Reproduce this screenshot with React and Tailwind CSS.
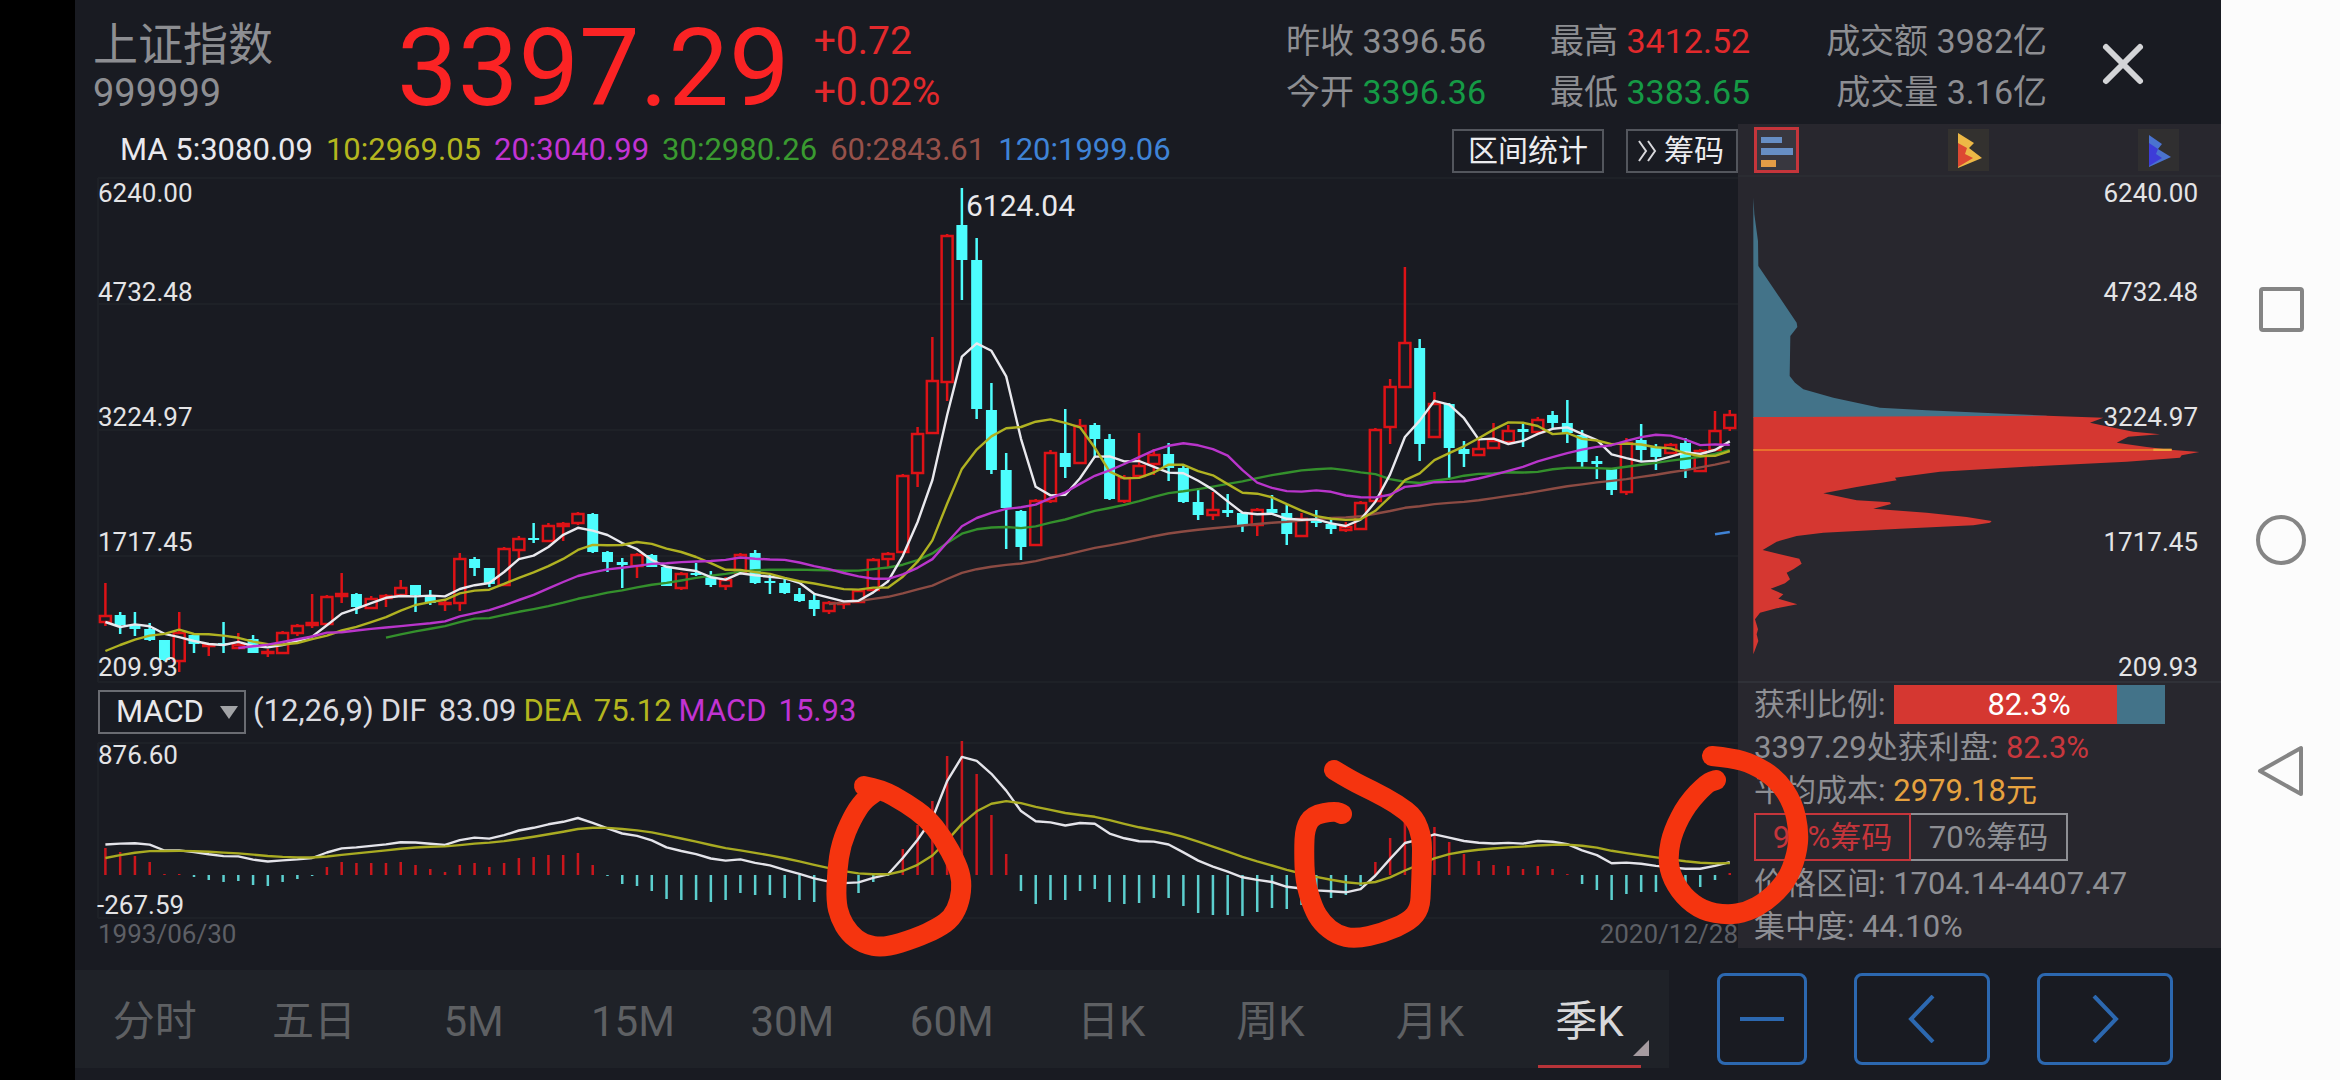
import { useState } from "react";
import clsx from "clsx";

const FIRST_X = 105.4;
const STEP = 14.767;
const xAt = (i) => FIRST_X + i * STEP;

// [up, high, body top, body bottom, low] on the drawing's y axis, one per quarter
const CANDLES = [
	[1, 582, 614, 621, 625], [0, 611, 614, 624, 633], [0, 611, 624, 628, 635], [0, 622, 628, 639, 640],
	[0, 639, 639, 659, 660], [1, 611, 631, 660, 671], [0, 632, 634, 643, 652], [1, 642, 643, 645, 655],
	[0, 621, 642, 644, 652], [1, 632, 643, 647, 648], [0, 634, 638, 652, 652], [1, 648, 650, 652, 656],
	[1, 630, 631, 652, 652], [1, 623, 624, 632, 635], [1, 593, 621, 624, 627], [1, 594, 595, 623, 624],
	[1, 572, 592, 595, 602], [0, 592, 593, 606, 613], [1, 595, 597, 607, 608], [1, 593, 594, 597, 606],
	[1, 579, 586, 594, 596], [0, 584, 584, 594, 611], [0, 589, 594, 602, 604], [1, 599, 601, 603, 610],
	[1, 552, 557, 602, 610], [0, 556, 558, 567, 575], [0, 567, 567, 583, 586], [1, 546, 547, 584, 585],
	[1, 535, 537, 549, 557], [0, 522, 537, 539, 542], [1, 522, 524, 540, 541], [1, 521, 522, 525, 540],
	[1, 511, 512, 522, 524], [0, 512, 513, 551, 552], [0, 550, 551, 561, 571], [0, 557, 561, 564, 587],
	[1, 552, 553, 565, 577], [0, 553, 554, 566, 566], [0, 565, 566, 585, 585], [1, 571, 572, 587, 589],
	[0, 562, 572, 574, 575], [0, 570, 576, 584, 586], [1, 576, 578, 585, 589], [1, 552, 553, 572, 572],
	[0, 549, 552, 582, 583], [0, 574, 580, 582, 593], [0, 577, 582, 592, 593], [0, 587, 593, 600, 601],
	[0, 592, 599, 608, 615], [1, 600, 601, 610, 613], [1, 600, 601, 602, 608], [1, 588, 589, 601, 602],
	[1, 557, 558, 589, 590], [1, 551, 552, 558, 567], [1, 473, 474, 551, 551], [1, 426, 432, 472, 486],
	[1, 336, 379, 432, 432], [1, 233, 234, 381, 400], [0, 187, 224, 259, 299], [0, 237, 259, 408, 418],
	[0, 382, 409, 469, 473], [0, 452, 469, 507, 548], [0, 509, 510, 546, 559], [1, 498, 499, 544, 545],
	[1, 449, 451, 500, 502], [0, 408, 452, 466, 477], [1, 418, 424, 462, 462], [0, 422, 424, 438, 457],
	[0, 433, 438, 498, 499], [1, 474, 476, 500, 502], [1, 432, 464, 475, 475], [1, 448, 453, 463, 474],
	[0, 442, 453, 467, 480], [0, 463, 467, 501, 502], [0, 487, 501, 514, 519], [1, 491, 508, 514, 519],
	[0, 493, 509, 512, 516], [0, 511, 512, 524, 531], [1, 507, 508, 524, 535], [0, 494, 508, 512, 513],
	[0, 504, 512, 533, 544], [1, 512, 517, 535, 536], [0, 509, 519, 522, 526], [0, 518, 523, 528, 533],
	[1, 521, 525, 529, 531], [1, 500, 501, 528, 528], [1, 427, 428, 500, 500], [1, 378, 385, 426, 443],
	[1, 266, 341, 386, 386], [0, 338, 347, 443, 460], [1, 391, 402, 436, 436], [0, 402, 403, 447, 478],
	[0, 440, 448, 453, 466], [1, 439, 447, 454, 455], [1, 422, 439, 447, 447], [1, 424, 429, 441, 441],
	[0, 423, 428, 431, 446], [1, 416, 418, 431, 432], [0, 410, 414, 422, 427], [0, 399, 422, 432, 442],
	[0, 429, 434, 461, 466], [0, 455, 460, 463, 478], [0, 468, 468, 489, 494], [1, 437, 441, 491, 494],
	[0, 423, 439, 449, 460], [0, 443, 446, 456, 469], [1, 442, 443, 452, 453], [0, 437, 442, 468, 477],
	[1, 448, 449, 470, 471], [1, 410, 429, 449, 449], [1, 409, 413, 427, 430],
];

// closes of the ten quarters before the first visible candle
const EARLIER = [686, 684, 682, 679, 676, 674, 599, 641, 630, 621];
const CLOSES = [...EARLIER, ...CANDLES.map(([up, , top, bottom]) => (up ? top : bottom))];

const MACD_ZERO = 873;
const MACD_BARS = [
	27, 23, 19, 13, 1, 1, -2, -5, -7, -6, -10, -11, -7, -4, -1, 8, 13, 12, 12, 12, 13, 10, 6, 3, 10, 12, 8, 12,
	17, 18, 20, 20, 22, 10, -1, -9, -11, -16, -24, -25, -25, -27, -25, -18, -20, -20, -23, -25, -27, -27, -24,
	-18, -7, 0, 26, 50, 74, 119, 134, 101, 60, 21, -16, -29, -25, -25, -16, -14, -27, -29, -28, -23, -23, -31,
	-38, -40, -40, -41, -37, -33, -34, -30, -27, -23, -20, -11, 13, 37, 55, 50, 48, 33, 21, 14, 10, 9, 6, 9, 6,
	1, -9, -15, -25, -19, -17, -17, -16, -15, -12, -5, 2,
];

const AVERAGES = [
	{ days: 60, color: "#8c4b43" },
	{ days: 30, color: "#34902c" },
	{ days: 5, color: "#e9e9ee" },
	{ days: 10, color: "#b0b222" },
	{ days: 20, color: "#b935cb" },
	{ days: 120, color: "#3f83d6" },
];

const MA_LEGEND = [
	["MA 5:", "3080.09", "text-[#e9e9ee]"],
	["10:", "2969.05", "text-[#b4b61f]"],
	["20:", "3040.99", "text-[#c233d3]"],
	["30:", "2980.26", "text-[#3a9a30]"],
	["60:", "2843.61", "text-[#96514a]"],
	["120:", "1999.06", "text-[#3f83d6]"],
];

const PRICE_LABELS = [
	["6240.00", 201],
	["4732.48", 300],
	["3224.97", 425],
	["1717.45", 550],
	["209.93", 675],
];

const TABS = ["分时", "五日", "5M", "15M", "30M", "60M", "日K", "周K", "月K", "季K"];

const CHIP_BLUE =
	"40,80 43,130 54,210 55,285 170,455 172,468 151,495 149,615 165,635 190,655 280,680 420,710 560,718 760,727 920,734 920,740 40,740";
const CHIP_RED =
	"40,738 920,734 1090,740 1050,755 1110,768 1180,782 1260,790 1165,797 1130,815 1220,828 1290,836 1378,843 1325,853 1320,860 1160,872 900,885 600,902 465,920 470,928 350,948 250,967 350,988 450,994 453,999 400,1013 560,1025 680,1038 755,1050 750,1055 700,1063 480,1073 250,1085 170,1095 110,1112 68,1137 120,1150 178,1163 185,1178 160,1195 140,1205 150,1225 135,1237 92,1253 130,1270 115,1283 172,1300 110,1312 60,1325 45,1345 54,1375 50,1390 55,1410 40,1450";

const MARKS = [
	[[864, 785], [881, 788], [906, 802], [927, 817], [943, 837], [957, 863], [962, 880], [960, 900], [952, 917], [938, 927], [916, 937], [884, 947], [863, 943], [849, 932], [840, 917], [836, 900], [837, 870], [841, 843], [852, 817], [863, 800], [874, 792]],
	[[1334, 769], [1352, 780], [1373, 790], [1397, 803], [1415, 817], [1422, 837], [1422, 857], [1421, 887], [1420, 907], [1410, 920], [1383, 932], [1355, 938], [1337, 934], [1322, 922], [1313, 907], [1305, 880], [1304, 850], [1305, 827], [1313, 814], [1335, 810], [1342, 813]],
	[[1712, 755], [1732, 757], [1753, 763], [1777, 778], [1793, 802], [1799, 830], [1797, 853], [1787, 880], [1767, 900], [1747, 911], [1727, 914], [1703, 910], [1683, 895], [1670, 873], [1668, 853], [1673, 830], [1687, 803], [1707, 782], [1716, 779]],
];

function averagePoints(days) {
	const points = [];
	CANDLES.forEach((_, i) => {
		const end = i + EARLIER.length + 1;
		if (end < days) return;
		const sum = CLOSES.slice(end - days, end).reduce((a, b) => a + b, 0);
		points.push(`${xAt(i).toFixed(1)},${(sum / days).toFixed(1)}`);
	});
	return points.join(" ");
}

// The bar is twice DIF - DEA, and DEA moves by an eighth of it each step
function macdLines() {
	let dea = 856;
	const difPoints = [];
	const deaPoints = [];
	MACD_BARS.forEach((bar, i) => {
		if (i > 0) dea -= bar / 8;
		deaPoints.push(`${xAt(i).toFixed(1)},${dea.toFixed(1)}`);
		difPoints.push(`${xAt(i).toFixed(1)},${(dea - bar / 2).toFixed(1)}`);
	});
	return { dif: difPoints.join(" "), dea: deaPoints.join(" ") };
}

function smoothPath(points) {
	let d = `M${points[0][0]} ${points[0][1]}`;
	for (let i = 1; i < points.length - 1; i++) {
		const [x, y] = points[i];
		const [nx, ny] = points[i + 1];
		d += ` Q${x} ${y} ${(x + nx) / 2} ${(y + ny) / 2}`;
	}
	const last = points[points.length - 1];
	return `${d} L${last[0]} ${last[1]}`;
}

function Candle({ x, data }) {
	const [up, high, top, bottom, low] = data;
	if (up) {
		return (
			<g stroke="#dd1216" strokeWidth="2.5" fill="none">
				<line x1={x} x2={x} y1={high} y2={top} />
				<rect x={x - 5.5} y={top + 1} width="11" height={Math.max(bottom - top - 1, 1)} />
				<line x1={x} x2={x} y1={bottom} y2={low} />
			</g>
		);
	}
	return (
		<g fill="#4dfdfd">
			<rect x={x - 1.25} y={high} width="2.5" height={low - high} />
			<rect x={x - 5.5} y={top} width="11" height={Math.max(bottom - top, 2)} />
		</g>
	);
}

function PriceChart() {
	return (
		<svg viewBox="75 176 1663 508" className="block h-auto w-full" role="img" aria-label="K线图">
			<g stroke="#1e2127" strokeWidth="2">
				{[177, 303, 429, 555, 681].map((y) => (
					<line key={y} x1="98" x2="1738" y1={y} y2={y} />
				))}
				<line x1="98" x2="98" y1="177" y2="681" />
			</g>
			{CANDLES.map((c, i) => (
				<Candle key={i} x={xAt(i)} data={c} />
			))}
			{AVERAGES.map(({ days, color }) => (
				<polyline key={days} points={averagePoints(days)} fill="none" stroke={color} strokeWidth="2.4" strokeLinejoin="round" />
			))}
			{PRICE_LABELS.map(([label, y]) => (
				<text key={label} x="98" y={y} className="fill-[#e4e4e6] text-[26px]">{label}</text>
			))}
			<text x="966" y="215" className="fill-[#e9e9ec] text-[30px]">6124.04</text>
		</svg>
	);
}

function MacdChart() {
	const { dif, dea } = macdLines();
	return (
		<svg viewBox="75 736 1663 182" className="block h-auto w-full" role="img" aria-label="MACD">
			<g stroke="#1e2127" strokeWidth="2">
				<line x1="98" x2="1738" y1="741" y2="741" />
				<line x1="98" x2="1738" y1="916" y2="916" />
				<line x1="98" x2="98" y1="741" y2="916" />
			</g>
			{MACD_BARS.map((bar, i) => (
				<rect
					key={i}
					x={xAt(i) - 1.25}
					y={bar > 0 ? MACD_ZERO - bar : MACD_ZERO}
					width="2.5"
					height={Math.max(Math.abs(bar), 1)}
					fill={bar > 0 ? "#c9161c" : "#5ccfcf"}
				/>
			))}
			<polyline points={dif} fill="none" stroke="#e4e4ea" strokeWidth="2.4" strokeLinejoin="round" />
			<polyline points={dea} fill="none" stroke="#a9ab22" strokeWidth="2.4" strokeLinejoin="round" />
			<text x="98" y="762" className="fill-[#e4e4e6] text-[26px]">876.60</text>
			<text x="97" y="912" className="fill-[#e4e4e6] text-[26px]">-267.59</text>
		</svg>
	);
}

function ChipChart() {
	return (
		<svg viewBox="1738 176 483 504" className="block h-auto w-full" role="img" aria-label="筹码分布">
			<g transform="translate(1740 170) scale(0.33333)">
				<polygon points={CHIP_BLUE} fill="#437389" />
				<polygon points={CHIP_RED} fill="#d53731" />
				<rect x="40" y="834" width="1255" height="6" fill="#e8702c" />
				<rect x="1240" y="833" width="55" height="7" fill="#eea33c" />
			</g>
			{PRICE_LABELS.map(([label, y]) => (
				<text key={label} x="2198" y={y} textAnchor="end" className="fill-[#e4e4e6] text-[26px]">{label}</text>
			))}
		</svg>
	);
}

function Stat({ label, value, color, label2, value2, color2 }) {
	return (
		<dl className="text-right text-[34px] leading-[51px] whitespace-nowrap text-[#8d8e92]">
			<div>
				<dt className="inline">{label} </dt>
				<dd className={clsx("inline", color)}>{value}</dd>
			</div>
			<div>
				<dt className="inline">{label2} </dt>
				<dd className={clsx("inline", color2)}>{value2}</dd>
			</div>
		</dl>
	);
}

function Header() {
	return (
		<header className="flex h-[124px] pt-4 pl-[18px] whitespace-nowrap">
			<div className="w-[304px] pt-1 text-[#8d8e92]">
				<h1 className="text-[45px] leading-[52px]">上证指数</h1>
				<p className="text-[38px] leading-[42px]">999999</p>
			</div>
			<p className="text-[108px] leading-[104px] text-[#fb2324]">3397.29</p>
			<div className="ml-6 text-[39px] leading-[51px] text-[#e2292c]">
				<p>+0.72</p>
				<p>+0.02%</p>
			</div>
			<div className="ml-auto flex">
				<Stat label="昨收" value="3396.56" label2="今开" value2="3396.36" color2="text-[#159a45]" />
				<div className="ml-16">
					<Stat label="最高" value="3412.52" color="text-[#e2292c]" label2="最低" value2="3383.65" color2="text-[#159a45]" />
				</div>
				<div className="ml-19">
					<Stat label="成交额" value="3982亿" label2="成交量" value2="3.16亿" />
				</div>
			</div>
			<button type="button" aria-label="关闭" className="mt-6 mr-[74px] ml-13 h-12 w-12">
				<svg viewBox="0 0 48 48" className="h-12 w-12" stroke="#d3d4d7" strokeWidth="6" strokeLinecap="round">
					<path d="M7 7 41 41M41 7 7 41" />
				</svg>
			</button>
		</header>
	);
}

function ChartColumn() {
	return (
		<section className="min-w-0 flex-1">
			<div className="flex h-[53px] items-center pl-[45px] text-[31px] whitespace-nowrap">
				<div className="flex gap-[13px]">
					{MA_LEGEND.map(([name, value, color]) => (
						<span key={name} className={color}>{name}{value}</span>
					))}
				</div>
				<button type="button" className="ml-auto h-11 border-2 border-[#53565d] px-[14px] text-[30px] leading-10 text-[#ececef]">区间统计</button>
				<button type="button" className="ml-[22px] flex h-11 items-center gap-1 border-2 border-[#53565d] pr-3 pl-2 text-[30px] leading-10 text-[#ececef]">
					<svg viewBox="0 0 24 24" className="h-6 w-6" fill="none" stroke="#d8d8dc" strokeWidth="2">
						<path d="M3 2l7 10-7 10M12 2l7 10-7 10" />
					</svg>
					筹码
				</button>
			</div>
			<PriceChart />
			<div className="flex h-[53px] items-center gap-[7px] pl-[23px] text-[31px] whitespace-nowrap text-[#dcdce0]">
				<div className="relative">
					<select aria-label="指标" className="block h-11 w-[148px] appearance-none border-2 border-[#6a6c72] bg-transparent pl-4 leading-10 text-[#e9e9ec]">
						<option>MACD</option>
					</select>
					<svg viewBox="0 0 18 13" className="pointer-events-none absolute top-4 right-2 h-[13px] w-[18px]" fill="#a2a3a6">
						<path d="M0 0h18L9 13z" />
					</svg>
				</div>
				<span>(12,26,9)</span>
				<span>DIF<span className="ml-3">83.09</span></span>
				<span className="text-[#b4b61f]">DEA<span className="ml-3">75.12</span></span>
				<span className="text-[#c233d3]">MACD<span className="ml-3">15.93</span></span>
			</div>
			<MacdChart />
			<div className="flex justify-between pl-[23px] text-[26px] leading-7 text-[#5d5f65]">
				<time dateTime="1993-06-30">1993/06/30</time>
				<time dateTime="2020-12-28">2020/12/28</time>
			</div>
		</section>
	);
}

function ChipPanel() {
	const [range, setRange] = useState("90%筹码");
	return (
		<aside className="w-[483px] shrink-0 bg-[#28272e]">
			<div className="flex h-[53px] items-center justify-between border-b-2 border-[#2b2c32] pr-[42px] pl-4">
				<button type="button" aria-label="筹码分布" className="h-[46px] w-[45px] border-3 border-[#c5353b] bg-[#38373f]">
					<svg viewBox="0 0 39 40" className="block w-full">
						<path d="M4 7h21v6H4zM4 18h32v7H4z" fill="#678ec4" />
						<path d="M4 30h15v7H4z" fill="#e39c46" />
					</svg>
				</button>
				<button type="button" aria-label="远期成本" className="h-[42px] w-[41px] bg-[#33312f]">
					<svg viewBox="0 0 41 42" className="block w-full">
						<path d="M10 4 26 14 21 19 34 29 10 39z" fill="#edb846" />
						<path d="M10 14 19 19 17 25 25 29 10 38z" fill="#dd4932" />
					</svg>
				</button>
				<button type="button" aria-label="近期成本" className="h-[42px] w-[41px] bg-[#302f30]">
					<svg viewBox="0 0 41 42" className="block w-full">
						<path d="M11 6 24 15 20 20 33 28 11 38z" fill="#4a73cf" />
						<path d="M11 14 20 20 18 25 24 29 11 37z" fill="#3d3cd8" />
					</svg>
				</button>
			</div>
			<ChipChart />
			<div className="border-t-2 border-[#303138] pl-4 text-[31px] leading-[43px] whitespace-nowrap text-[#8e8f94]">
				<div className="flex items-center gap-2">
					<span>获利比例:</span>
					<div className="relative h-[39px] w-[271px] bg-[#437389] text-center leading-[39px] text-white">
						<div className="h-full bg-[#d53731]" style={{ width: "82.3%" }} />
						<span className="absolute inset-0">82.3%</span>
					</div>
				</div>
				<p>3397.29处获利盘: <span className="text-[#c8373d]">82.3%</span></p>
				<p>平均成本: <span className="text-[#e6a23f]">2979.18元</span></p>
				<div className="flex py-[1px]">
					{["90%筹码", "70%筹码"].map((name) => (
						<button
							key={name}
							type="button"
							aria-pressed={range === name}
							onClick={() => setRange(name)}
							className={clsx(
								"h-12 w-[157px] border-2 leading-[43px]",
								range === name ? "border-[#c5353b] text-[#c5353b]" : "border-l-0 border-[#8e8f94]"
							)}
						>
							{name}
						</button>
					))}
				</div>
				<p>价格区间: 1704.14-4407.47</p>
				<p>集中度: 44.10%</p>
			</div>
		</aside>
	);
}

function Marks() {
	return (
		<svg viewBox="75 123 2146 824" className="pointer-events-none absolute inset-0 h-full w-full overflow-visible">
			{MARKS.map((points, i) => (
				<path key={i} d={smoothPath(points)} fill="none" stroke="#f5340f" strokeWidth="20" strokeLinecap="round" strokeLinejoin="round" />
			))}
		</svg>
	);
}

function Footer() {
	const [tab, setTab] = useState("季K");
	const button = "flex h-[92px] items-center justify-center rounded-lg border-3 border-[#2c68b0]";
	return (
		<footer className="flex items-center pt-[22px] pb-3">
			<nav className="flex h-[98px] flex-1 bg-[#1f2228]">
				{TABS.map((name) => (
					<button
						key={name}
						type="button"
						onClick={() => setTab(name)}
						className={clsx("relative flex-1 pt-1 text-[42px]", tab === name ? "text-[#d8d8da]" : "text-[#5e6063]")}
					>
						{name}
						{tab === name && (
							<>
								<span className="absolute inset-x-7 bottom-0 h-[3px] bg-[#b83439]" />
								<svg viewBox="0 0 16 16" className="absolute right-5 bottom-3 h-4 w-4" fill="#a59ba0">
									<path d="M16 0v16H0z" />
								</svg>
							</>
						)}
					</button>
				))}
			</nav>
			<div className="flex shrink-0 pr-12 pl-12">
				<button type="button" aria-label="缩小" className={clsx(button, "w-[90px]")}>
					<svg viewBox="0 0 44 44" className="h-11 w-11" fill="none" stroke="#2c68b0" strokeWidth="4"><path d="M0 22h44" /></svg>
				</button>
				<button type="button" aria-label="向左" className={clsx(button, "ml-[47px] w-[136px]")}>
					<svg viewBox="0 0 44 48" className="h-12 w-11" fill="none" stroke="#2c68b0" strokeWidth="4"><path d="M33 1 11 24 33 47" /></svg>
				</button>
				<button type="button" aria-label="向右" className={clsx(button, "ml-[47px] w-[136px]")}>
					<svg viewBox="0 0 44 48" className="h-12 w-11" fill="none" stroke="#2c68b0" strokeWidth="4"><path d="M11 1 33 24 11 47" /></svg>
				</button>
			</div>
		</footer>
	);
}

function SystemNav() {
	return (
		<nav className="flex w-[119px] shrink-0 flex-col items-center justify-center gap-[183px] bg-[#fcfcfc]">
			<button type="button" aria-label="最近任务" className="h-12 w-12">
				<svg viewBox="0 0 48 48" fill="none" stroke="#858585" strokeWidth="4"><rect x="4" y="4" width="41" height="41" rx="2" /></svg>
			</button>
			<button type="button" aria-label="主屏幕" className="h-12 w-12">
				<svg viewBox="0 0 48 48" className="overflow-visible" fill="none" stroke="#858585" strokeWidth="4"><circle cx="24" cy="24" r="23" /></svg>
			</button>
			<button type="button" aria-label="返回" className="h-12 w-12">
				<svg viewBox="0 0 48 48" className="overflow-visible" fill="none" stroke="#858585" strokeWidth="4" strokeLinejoin="round"><path d="M44 1v46L3 24z" /></svg>
			</button>
		</nav>
	);
}

export default function App() {
	return (
		<div className="flex min-h-screen bg-black pl-[75px] font-['Roboto','Noto_Sans_CJK_SC',sans-serif]">
			<main className="min-w-0 flex-1 bg-[#191b22]">
				<Header />
				<div className="relative flex">
					<ChartColumn />
					<ChipPanel />
					<Marks />
				</div>
				<Footer />
			</main>
			<SystemNav />
		</div>
	);
}
